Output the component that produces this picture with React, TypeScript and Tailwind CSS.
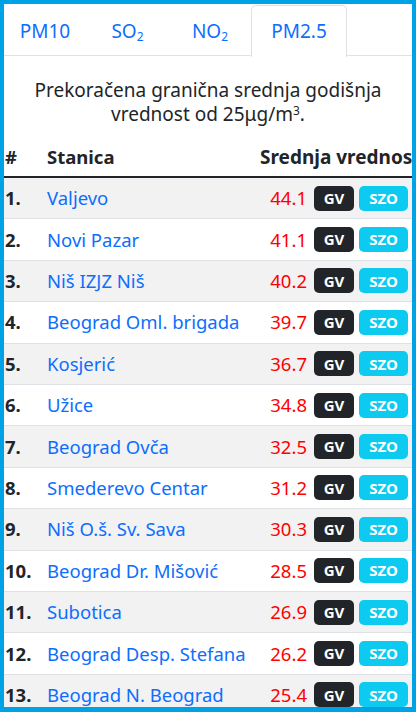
import type { ReactNode } from "react";

const tabs: { label: ReactNode; width: string; active?: boolean }[] = [
  { label: "PM10", width: "w-[82px]" },
  { label: <>SO<sub className="text-[12px] leading-none text-[#0d6efd]">2</sub></>, width: "w-[83px]" },
  { label: <>NO<sub className="text-[12px] leading-none text-[#0d6efd]">2</sub></>, width: "w-[82px]" },
  { label: "PM2.5", width: "w-[96px]", active: true },
];

const rows = [
  ["Valjevo", "44.1"],
  ["Novi Pazar", "41.1"],
  ["Niš IZJZ Niš", "40.2"],
  ["Beograd Oml. brigada", "39.7"],
  ["Kosjerić", "36.7"],
  ["Užice", "34.8"],
  ["Beograd Ovča", "32.5"],
  ["Smederevo Centar", "31.2"],
  ["Niš O.š. Sv. Sava", "30.3"],
  ["Beograd Dr. Mišović", "28.5"],
  ["Subotica", "26.9"],
  ["Beograd Desp. Stefana", "26.2"],
  ["Beograd N. Beograd", "25.4"],
];

export default function App() {
  return (
    <div
      className="h-[712px] w-[416px] border-4 border-b-[5px] border-[#00a2e6] bg-white text-[#212529]"
      style={{ fontFamily: '"Noto Sans", "Open Sans", sans-serif' }}
    >
      <div className="h-full w-full overflow-hidden">
        <nav className="flex h-[52px] border-b border-[#dee2e6] pt-[1px]">
          {tabs.map((t, i) => (
            <div
              key={i}
              className={`flex h-[52px] items-center justify-center text-[19px] text-[#0d6efd] ${t.width} ${
                t.active
                  ? "rounded-t-[5px] border border-b-0 border-[#dee2e6] bg-white"
                  : ""
              }`}
            >
              <span className="text-[#0d6efd]">{t.label}</span>
            </div>
          ))}
        </nav>

        <p className="px-6 pt-[23px] pb-[12px] text-center text-[19px] leading-[23.5px]">
          Prekoračena granična srednja godišnja vrednost od 25μg/m
          <sup className="text-[12px] leading-none">3</sup>.
        </p>

        <div className="flex h-[40px] items-center whitespace-nowrap border-b-2 border-[#212529] text-[18.5px] font-bold">
          <div className="w-[43px] shrink-0 pl-[1px]">#</div>
          <div className="w-[213px] shrink-0">Stanica</div>
          <div className="shrink-0 text-[19px]">Srednja vrednost</div>
        </div>

        {rows.map(([name, value], i) => (
          <div
            key={name}
            className={`flex h-[41.4px] items-center whitespace-nowrap border-b border-[#dee2e6] text-[18.5px] ${
              i % 2 === 0 ? "bg-[#f2f2f2]" : "bg-white"
            }`}
          >
            <div className="w-[43px] pl-[1px] font-bold">{i + 1}.</div>
            <div className="flex-1 text-[#0d6efd]">{name}</div>
            <div className="text-[#ff0000]">{value}</div>
            <span className="ml-[7px] flex h-[25px] w-[40px] items-center justify-center rounded-[5px] bg-[#212529] text-[15px] font-bold text-white">
              GV
            </span>
            <span className="ml-[5px] mr-[4px] flex h-[25px] w-[49px] items-center justify-center rounded-[5px] bg-[#0dcaf0] text-[15px] font-bold text-white">
              SZO
            </span>
          </div>
        ))}
      </div>
    </div>
  );
}
